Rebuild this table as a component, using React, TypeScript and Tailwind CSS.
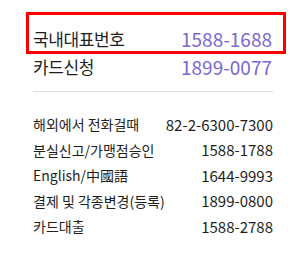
import React from "react";

const mainLines = [
  { label: "국내대표번호", tel: "1588-1688" },
  { label: "카드신청", tel: "1899-0077" },
];

const subLines = [
  { label: "해외에서 전화걸때", tel: "82-2-6300-7300" },
  { label: "분실신고/가맹점승인", tel: "1588-1788" },
  { label: "English/中國語", tel: "1644-9993" },
  { label: "결제 및 각종변경(등록)", tel: "1899-0800" },
  { label: "카드대출", tel: "1588-2788" },
];

export default function App() {
  return (
    <div
      className="w-[308px] h-[270px] bg-white text-[#1e1e1e]"
      style={{ fontFamily: '"Noto Sans CJK KR", "Noto Sans", sans-serif' }}
    >
      <div className="pt-[12px] pl-[26px]">
        <div className="w-[260px] h-[42px] border-[3px] border-[#ff0000] pl-[4px] pr-[11px] flex items-end">
          <div className="flex w-full justify-between items-center h-[25px] leading-[25px]">
            <span className="text-[17px] tracking-[-0.4px]">{mainLines[0].label}</span>
            <span className="text-[19px] text-[#7a68cf]">{mainLines[0].tel}</span>
          </div>
        </div>
        <div className="flex justify-between items-center w-[260px] pl-[7px] pr-[14px] h-[25px] leading-[25px]">
          <span className="text-[17px] tracking-[-0.4px]">{mainLines[1].label}</span>
          <span className="text-[19px] text-[#7a68cf]">{mainLines[1].tel}</span>
        </div>
      </div>
      <div className="mx-[33px] w-[240px] mt-[12px] border-t border-[#dedede]" />
      <div className="mt-[20px] ml-[33px] w-[240px] flex flex-col">
        {subLines.map((row) => (
          <div
            key={row.tel}
            className="flex justify-between items-center h-[25.5px]"
          >
            <span className="text-[14px]">{row.label}</span>
            <span className="text-[15px]">{row.tel}</span>
          </div>
        ))}
      </div>
    </div>
  );
}
